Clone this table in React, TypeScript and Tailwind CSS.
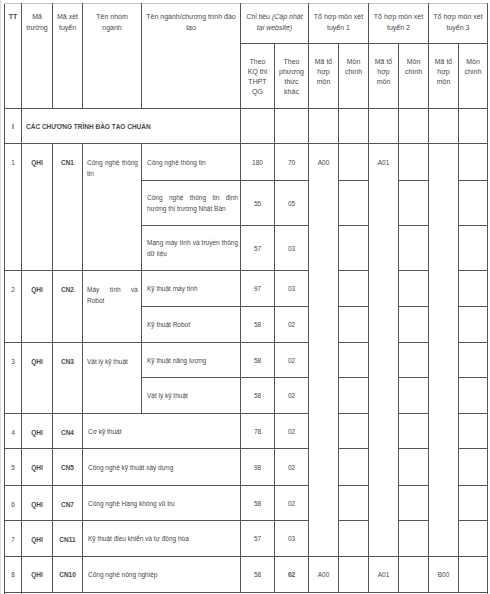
import React from 'react';

interface Item {
  name: string;
  kq: string;
  khac: string;
  h: string;
}

interface Group {
  tt: string;
  code: string;
  group?: string;
  items: Item[];
}

// nhóm ngành, mỗi ngành là một dòng con
const groups: Group[] = [
  {
    tt: '1',
    code: 'CN1',
    group: 'Công nghệ thông tin',
    items: [
      { name: 'Công nghệ thông tin', kq: '180', khac: '70', h: 'h-[37px]' },
      { name: 'Công nghệ thông tin định hướng thị trường Nhật Bản', kq: '55', khac: '05', h: 'h-[45px]' },
      { name: 'Mạng máy tính và truyền thông dữ liệu', kq: '57', khac: '03', h: 'h-[45px]' },
    ],
  },
  {
    tt: '2',
    code: 'CN2',
    group: 'Máy tính và Robot',
    items: [
      { name: 'Kỹ thuật máy tính', kq: '97', khac: '03', h: 'h-[36px]' },
      { name: 'Kỹ thuật Robot', kq: '58', khac: '02', h: 'h-[36px]' },
    ],
  },
  {
    tt: '3',
    code: 'CN3',
    group: 'Vật lý kỹ thuật',
    items: [
      { name: 'Kỹ thuật năng lượng', kq: '58', khac: '02', h: 'h-[35px]' },
      { name: 'Vật lý kỹ thuật', kq: '58', khac: '02', h: 'h-[36px]' },
    ],
  },
  { tt: '4', code: 'CN4', items: [{ name: 'Cơ kỹ thuật', kq: '78', khac: '02', h: 'h-[35px]' }] },
  { tt: '5', code: 'CN5', items: [{ name: 'Công nghệ kỹ thuật xây dựng', kq: '98', khac: '02', h: 'h-[37px]' }] },
  { tt: '6', code: 'CN7', items: [{ name: 'Công nghệ Hàng không vũ trụ', kq: '58', khac: '02', h: 'h-[35px]' }] },
  { tt: '7', code: 'CN11', items: [{ name: 'Kỹ thuật điều khiển và tự động hóa', kq: '57', khac: '03', h: 'h-[36px]' }] },
];

const mergedRows = groups.reduce((sum, g) => sum + g.items.length, 0);

const cell = 'border border-[#555] p-0';
const top = 'align-top pt-[13px]';

const App: React.FC = () => {
  return (
    <div
      className="w-[490px] h-[594px] overflow-hidden bg-white border-l border-[#dcdcdc] pl-[3px] pt-[3px] text-[#484848]"
      style={{ fontFamily: '"Liberation Sans", Arial, sans-serif' }}
    >
      <table className="table-fixed border-collapse w-[484px] text-[6.5px] leading-[11px]">
        <colgroup>
          <col className="w-[17px]" />
          <col className="w-[31px]" />
          <col className="w-[30px]" />
          <col className="w-[59px]" />
          <col className="w-[99px]" />
          <col className="w-[34px]" />
          <col className="w-[34px]" />
          <col className="w-[30px]" />
          <col className="w-[30px]" />
          <col className="w-[30px]" />
          <col className="w-[30px]" />
          <col className="w-[30px]" />
          <col className="w-[29px]" />
        </colgroup>
        <thead className="text-[7px] leading-[11px]">
          <tr className="h-[40px]">
            <th rowSpan={2} className={`${cell} border-t-[#c8c8c8] align-top pt-[7px] font-semibold`}>TT</th>
            <th rowSpan={2} className={`${cell} border-t-[#c8c8c8] align-top pt-[7px] px-[2px] font-normal`}>Mã trường</th>
            <th rowSpan={2} className={`${cell} border-t-[#c8c8c8] align-top pt-[7px] px-[3px] font-normal`}>Mã xét tuyển</th>
            <th rowSpan={2} className={`${cell} border-t-[#c8c8c8] align-top pt-[7px] px-[8px] font-normal`}>Tên nhóm ngành</th>
            <th rowSpan={2} className={`${cell} border-t-[#c8c8c8] align-top pt-[7px] px-[4px] font-normal`}>Tên ngành/chương trình đào tạo</th>
            <th colSpan={2} className={`${cell} border-t-[#c8c8c8] align-top pt-[7px] px-[3px] font-normal`}>
              Chỉ tiêu <i>(Cập nhật tại website)</i>
            </th>
            <th colSpan={2} className={`${cell} border-t-[#c8c8c8] align-top pt-[7px] px-[3px] font-normal`}>Tổ hợp môn xét tuyển 1</th>
            <th colSpan={2} className={`${cell} border-t-[#c8c8c8] align-top pt-[7px] px-[3px] font-normal`}>Tổ hợp môn xét tuyển 2</th>
            <th colSpan={2} className={`${cell} border-t-[#c8c8c8] align-top pt-[7px] px-[3px] font-normal`}>Tổ hợp môn xét tuyển 3</th>
          </tr>
          <tr className="h-[65px] leading-[10px]">
            <th className={`${cell} align-top pt-[13px] px-[3px] font-normal`}>Theo KQ thi THPT QG</th>
            <th className={`${cell} align-top pt-[13px] px-[2px] font-normal`}>Theo phương thức khác</th>
            {['1', '2', '3'].map(n => (
              <React.Fragment key={`sub-${n}`}>
                <th className={`${cell} align-top pt-[13px] px-[4px] font-normal`}>Mã tổ hợp môn</th>
                <th className={`${cell} align-top pt-[13px] px-[4px] font-normal`}>Môn chính</th>
              </React.Fragment>
            ))}
          </tr>
        </thead>
        <tbody>
          {/* Mục I */}
          <tr className="h-[35px]">
            <td className={`${cell} text-center font-bold`}>I</td>
            <td colSpan={4} className={`${cell} pl-[4px] font-semibold`}>CÁC CHƯƠNG TRÌNH ĐÀO TẠO CHUẨN</td>
            {Array.from({ length: 8 }).map((_, i) => (
              <td key={`sec-${i}`} className={cell} />
            ))}
          </tr>

          {groups.map((g, gi) =>
            g.items.map((it, ii) => (
              <tr key={`${g.code}-${ii}`} className={it.h}>
                {ii === 0 && (
                  <>
                    <td rowSpan={g.items.length} className={`${cell} ${top} text-center`}>{g.tt}</td>
                    <td rowSpan={g.items.length} className={`${cell} ${top} text-center font-bold`}>QHI</td>
                    <td rowSpan={g.items.length} className={`${cell} ${top} text-center font-bold`}>{g.code}</td>
                    {g.group && (
                      <td rowSpan={g.items.length} className={`${cell} ${top} pl-[4px] pr-[3px] text-justify`}>
                        {g.group}
                      </td>
                    )}
                  </>
                )}
                <td colSpan={g.group ? 1 : 2} className={`${cell} pl-[5px] pr-[2px] text-justify`}>
                  {it.name}
                </td>
                <td className={`${cell} text-center`}>{it.kq}</td>
                <td className={`${cell} text-center`}>{it.khac}</td>
                {gi === 0 && ii === 0 ? (
                  <>
                    <td rowSpan={mergedRows} className={`${cell} ${top} text-center`}>A00</td>
                    <td className={cell} />
                    <td rowSpan={mergedRows} className={`${cell} ${top} text-center`}>A01</td>
                    <td className={cell} />
                    <td rowSpan={mergedRows} className={cell} />
                    <td className={cell} />
                  </>
                ) : (
                  <>
                    <td className={cell} />
                    <td className={cell} />
                    <td className={cell} />
                  </>
                )}
              </tr>
            ))
          )}

          <tr className="h-[36px]">
            <td className={`${cell} text-center`}>8</td>
            <td className={`${cell} text-center font-bold`}>QHI</td>
            <td className={`${cell} text-center font-bold`}>CN10</td>
            <td colSpan={2} className={`${cell} pl-[5px]`}>Công nghệ nông nghiệp</td>
            <td className={`${cell} text-center`}>58</td>
            <td className={`${cell} text-center font-bold`}>02</td>
            <td className={`${cell} text-center`}>A00</td>
            <td className={cell} />
            <td className={`${cell} text-center`}>A01</td>
            <td className={cell} />
            <td className={`${cell} text-center`}>B00</td>
            <td className={cell} />
          </tr>

          <tr className="h-[36px]">
            <td className={cell} />
            <td colSpan={12} className={cell} />
          </tr>
        </tbody>
      </table>
    </div>
  );
};

export default App;
